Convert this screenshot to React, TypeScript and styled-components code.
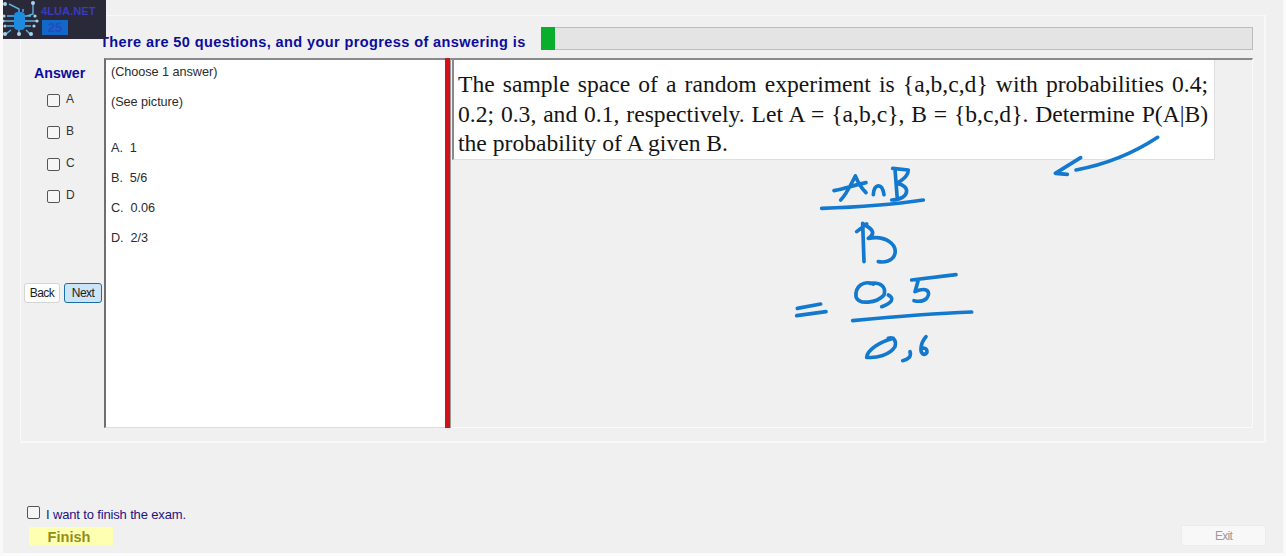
import styled, { createGlobalStyle } from "styled-components";

const GlobalStyle = createGlobalStyle`
  html, body {
    margin: 0;
    padding: 0;
    background: #f8f8f8;
    font-family: "Liberation Sans", Arial, sans-serif;
  }
`;

const Page = styled.div`
  position: relative;
  box-sizing: border-box;
  width: 1286px;
  height: 556px;
  display: flex;
  flex-direction: column;
  padding: 15px 17px 7px 17px;
  background: #f0f0f0;
  border-left: 3px solid #f9f9f9;
  border-right: 3px solid #f9f9f9;
  border-bottom: 3px solid #fbfbfb;
  overflow: hidden;
`;

const LogoBadge = styled.div`
  position: absolute;
  top: 0;
  left: -3px;
  width: 106px;
  height: 39px;
  display: flex;
  background: #29293a;
`;

const LogoText = styled.div`
  display: flex;
  flex-direction: column;
  align-items: flex-start;
  padding: 5px 0 0 1px;
`;

const LogoName = styled.span`
  font-size: 11px;
  line-height: 13px;
  font-weight: 700;
  color: #3b3bbc;
  letter-spacing: 0.1px;
`;

const LogoCount = styled.span`
  width: 26px;
  height: 15px;
  margin: 2px 0 0 1px;
  background: #1268c9;
  color: #2848c0;
  font-size: 13px;
  line-height: 15px;
  font-weight: 700;
  text-align: center;
`;

const GroupBox = styled.section`
  box-sizing: border-box;
  height: 428px;
  display: flex;
  flex-direction: column;
  padding: 11px 11px 13px 0;
  border: 1px solid #f8f8f8;
  border-width: 1px 2px 2px 1px;
`;

const Header = styled.header`
  display: flex;
  align-items: flex-end;
  height: 23px;
  margin-bottom: 8px;
  padding-left: 79px;
`;

const Title = styled.h1`
  width: 441px;
  margin: 0;
  font-size: 14.5px;
  line-height: 16px;
  font-weight: 700;
  letter-spacing: 0.4px;
  color: #0c0c9c;
  white-space: nowrap;
`;

const ProgressTrack = styled.div`
  flex: 1;
  box-sizing: border-box;
  height: 23px;
  background: #e4e4e4;
  border: 1px solid #bdbdbd;
`;

const ProgressFill = styled.div`
  height: 100%;
  margin: -1px 0 0 -1px;
  padding-bottom: 2px;
  background: #0aae2d;
`;

const Body = styled.div`
  flex: 1;
  display: flex;
  min-height: 0;
`;

const AnswerColumn = styled.aside`
  box-sizing: border-box;
  width: 83px;
  padding-top: 7px;
`;

const AnswerTitle = styled.div`
  padding-left: 13px;
  font-size: 14.2px;
  line-height: 16px;
  font-weight: 700;
  color: #0c0c9c;
`;

const Options = styled.div`
  display: flex;
  flex-direction: column;
  gap: 19px;
  margin-top: 13px;
  padding-left: 26px;
`;

const OptionRow = styled.label`
  display: flex;
  align-items: flex-start;
  gap: 6px;
  height: 13px;
  font-size: 12px;
  line-height: 11px;
  color: #333;
`;

const CheckBox = styled.input.attrs({ type: "checkbox" })`
  appearance: none;
  box-sizing: border-box;
  flex: none;
  width: 13px;
  height: 13px;
  margin: 0;
  background: #f6f6f6;
  border: 1px solid #555;
  border-radius: 2px;
`;

const NavButtons = styled.div`
  display: flex;
  gap: 4px;
  margin-top: 80px;
  padding-left: 3px;
`;

const NavButton = styled.button<{ $primary?: boolean }>`
  box-sizing: border-box;
  width: ${(p) => (p.$primary ? 38 : 36)}px;
  height: 20px;
  padding: 0;
  font-family: inherit;
  font-size: 12px;
  letter-spacing: -0.6px;
  color: #1b1b1b;
  background: ${(p) => (p.$primary ? "#cce4f7" : "#fdfdfd")};
  border: 1px solid ${(p) => (p.$primary ? "#1a6fa8" : "#d4d4d4")};
  border-radius: 3px;
`;

const QuestionPanel = styled.div`
  box-sizing: border-box;
  width: 341px;
  padding: 3px 6px 0 5px;
  background: #fff;
  border-top: 2px solid #8a8a8a;
  border-left: 2px solid #6f6f6f;
  border-bottom: 1px solid #dcdcdc;
`;

const QuestionLine = styled.div<{ $gap?: boolean }>`
  margin-top: ${(p) => (p.$gap ? 28 : 0)}px;
  margin-bottom: 12px;
  font-size: 12.7px;
  line-height: 18px;
  letter-spacing: -0.05px;
  white-space: pre;
  color: #2c2c2c;
`;

const Splitter = styled.div`
  box-sizing: border-box;
  width: 6px;
  background: #d2121a;
  border-right: 1px solid #9a9a9a;
`;

const PicturePanel = styled.div`
  position: relative;
  flex: 1;
  box-sizing: border-box;
  padding-left: 1px;
  border-top: 2px solid #8a8a8a;
  border-right: 1px solid #fafafa;
  border-bottom: 1px solid #fafafa;
`;

const QuestionImage = styled.div`
  box-sizing: border-box;
  width: 763px;
  height: 100px;
  padding: 10px 6px 0 4px;
  background: #fff;
  border-left: 2px solid #8a8a8a;
  border-right: 1px solid #dedede;
  border-bottom: 1px solid #dedede;
  font-family: "Liberation Serif", "Times New Roman", serif;
  font-size: 23.6px;
  line-height: 29.5px;
  text-align: justify;
  color: #141414;
`;

const Handwriting = styled.svg`
  position: absolute;
  top: 60px;
  left: 329px;
  fill: none;
  stroke: #1279cf;
  stroke-width: 11;
  stroke-linecap: round;
  stroke-linejoin: round;
`;

const Footer = styled.footer`
  margin-top: auto;
  display: flex;
  align-items: flex-end;
  justify-content: space-between;
`;

const FinishGroup = styled.div`
  display: flex;
  flex-direction: column;
  align-items: flex-start;
  padding-left: 7px;
`;

const FinishCheck = styled.label`
  display: flex;
  align-items: flex-start;
  gap: 6px;
  height: 14px;
  font-size: 13px;
  line-height: 17px;
  letter-spacing: -0.15px;
  color: #1f1284;
`;

const FinishButton = styled.button`
  width: 84px;
  height: 19px;
  margin: 7px 0 0 2px;
  padding: 0 4px 0 0;
  background: #ffffb2;
  border: none;
  border-radius: 2px;
  font-family: inherit;
  font-size: 14.6px;
  font-weight: 700;
  color: #8f8f1a;
`;

const ExitButton = styled.button`
  box-sizing: border-box;
  width: 85px;
  height: 21px;
  padding: 0;
  background: #f8f8f8;
  border: 1px solid #ececec;
  border-radius: 2px;
  font-family: inherit;
  font-size: 12px;
  letter-spacing: -0.7px;
  color: #9a9a9a;
`;

const CircuitLogo = () => (
  <svg width="40" height="39" viewBox="0 0 40 39" fill="none" stroke="#5fb0dc" strokeWidth="1.4">
    <rect x="14" y="12" width="11" height="18" rx="4" fill="#1f8be0" stroke="none" />
    <path d="M14 16H7M14 21H4M14 26H7M25 16H31M25 21H36M25 26H31M33 3V14L27 16M19 12V9L9 4M23 12V9M11 30L6 34M19 30V34M26 30L30 34" />
    <g fill="#a8d4ea" stroke="none">
      <circle cx="5" cy="4" r="2" />
      <circle cx="33" cy="3" r="2" />
      <circle cx="4" cy="16" r="1.6" />
      <circle cx="3" cy="21" r="1.6" />
      <circle cx="5" cy="26" r="1.6" />
      <circle cx="35" cy="16" r="1.6" />
      <circle cx="37" cy="21" r="1.6" />
      <circle cx="34" cy="26" r="1.6" />
      <circle cx="5" cy="34" r="2" />
      <circle cx="19" cy="34" r="2" />
      <circle cx="31" cy="34" r="2" />
    </g>
  </svg>
);

const options = ["A", "B", "C", "D"];
const choices = ["A.  1", "B.  5/6", "C.  0.06", "D.  2/3"];
const questionText =
  "The sample space of a random experiment is {a,b,c,d} with probabilities 0.4; 0.2; 0.3, and 0.1, respectively. Let A = {a,b,c}, B = {b,c,d}. Determine P(A|B) the probability of A given B.";
const answered = 1;
const total = 50;

export default function App() {
  return (
    <Page>
      <GlobalStyle />
      <LogoBadge>
        <CircuitLogo />
        <LogoText>
          <LogoName>4LUA.NET</LogoName>
          <LogoCount>25</LogoCount>
        </LogoText>
      </LogoBadge>

      <GroupBox>
        <Header>
          <Title>There are 50 questions, and your progress of answering is</Title>
          <ProgressTrack>
            <ProgressFill style={{ width: `${(answered / total) * 100}%` }} />
          </ProgressTrack>
        </Header>

        <Body>
          <AnswerColumn>
            <AnswerTitle>Answer</AnswerTitle>
            <Options>
              {options.map((o) => (
                <OptionRow key={o}>
                  <CheckBox />
                  {o}
                </OptionRow>
              ))}
            </Options>
            <NavButtons>
              <NavButton>Back</NavButton>
              <NavButton $primary>Next</NavButton>
            </NavButtons>
          </AnswerColumn>

          <QuestionPanel>
            <QuestionLine>(Choose 1 answer)</QuestionLine>
            <QuestionLine>(See picture)</QuestionLine>
            {choices.map((c, i) => (
              <QuestionLine key={c} $gap={i === 0}>
                {c}
              </QuestionLine>
            ))}
          </QuestionPanel>

          <Splitter />

          <PicturePanel>
            <QuestionImage>{questionText}</QuestionImage>
            <Handwriting width="400" height="260" viewBox="0 0 1200 780">
              <path d="M1133 52C1060 100 970 135 888 150M902 113L826 160L862 163" />
              <path d="M162 212C195 205 225 195 258 188M226 168C212 195 198 225 182 240M226 168C235 190 245 205 258 218" />
              <path d="M280 224C282 192 306 186 312 224" />
              <path d="M338 145L385 150C385 170 365 182 350 190C392 195 392 238 335 240M345 148L352 238" />
              <path d="M125 265C220 262 330 255 430 240" />
              <path d="M230 335L260 312M248 310L252 425M250 312C275 325 290 340 265 355C320 345 350 375 345 400C340 425 310 428 295 425" />
              <path d="M280 492C250 480 225 500 228 530C235 555 290 550 312 525C320 500 300 485 270 490" />
              <path d="M325 525C345 535 335 550 305 560" />
              <path d="M395 480L528 464M415 480L405 515C440 500 455 515 440 535C430 545 415 545 402 542" />
              <path d="M52 565L122 552M50 587L138 575" />
              <path d="M218 602C340 590 460 580 575 576" />
              <path d="M340 655C300 665 262 690 260 712C290 715 330 705 345 680C350 660 340 650 325 655" />
              <path d="M390 695C395 710 385 718 368 722" />
              <path d="M438 650C420 670 418 700 432 703C445 703 445 680 425 685" />
            </Handwriting>
          </PicturePanel>
        </Body>
      </GroupBox>

      <Footer>
        <FinishGroup>
          <FinishCheck>
            <CheckBox />I want to finish the exam.
          </FinishCheck>
          <FinishButton>Finish</FinishButton>
        </FinishGroup>
        <ExitButton>Exit</ExitButton>
      </Footer>
    </Page>
  );
}
